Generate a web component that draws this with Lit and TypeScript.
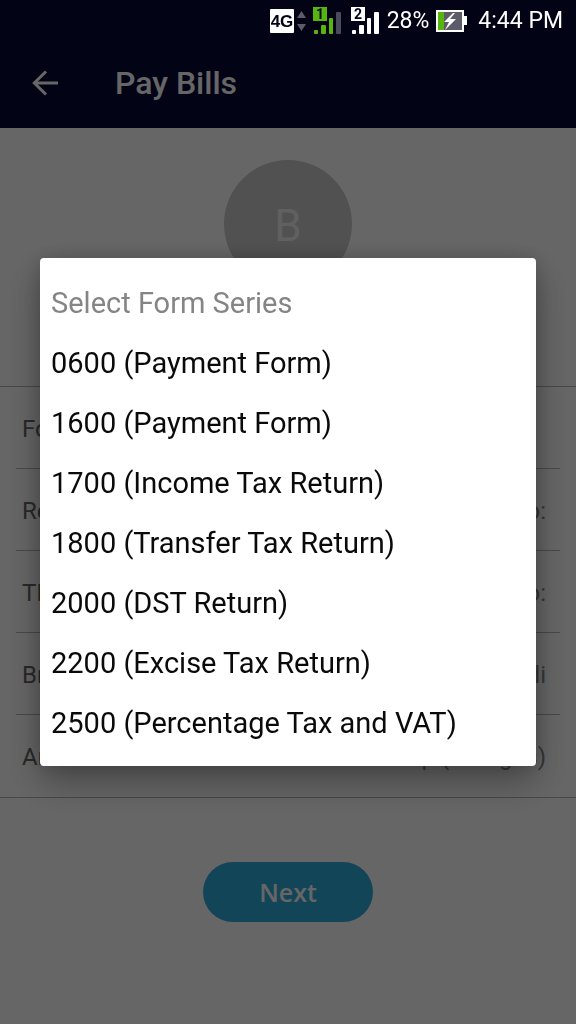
import { LitElement, html, css, svg } from "lit";
import { customElement, state } from "lit/decorators.js";

interface Field {
  id: string;
  label: string;
  hint: string;
}

const FIELDS: Field[] = [
  { id: "return", label: "Return Period", hint: "Period ending no:" },
  { id: "tin", label: "TIN", hint: "Taxpayer no:" },
  { id: "branch", label: "Branch Code", hint: "Branch kodi" },
  { id: "amount", label: "Amount", hint: "Php (Charges)" },
];

const SERIES = [
  "0600 (Payment Form)",
  "1600 (Payment Form)",
  "1700 (Income Tax Return)",
  "1800 (Transfer Tax Return)",
  "2000 (DST Return)",
  "2200 (Excise Tax Return)",
  "2500 (Percentage Tax and VAT)",
];

@customElement("status-bar")
class StatusBar extends LitElement {
  static styles = css`
    :host {
      display: flex;
      align-items: center;
      justify-content: flex-end;
      height: 42px;
      padding-right: 13px;
      box-sizing: border-box;
      color: #fff;
      font: 400 23px/28px Roboto, sans-serif;
    }
    .net { width: 36px; height: 24px; margin-right: 7px; }
    .sim { width: 28px; height: 28px; }
    .first { margin-right: 10px; }
    .second { margin-right: 8px; }
    .battery { width: 31px; height: 22px; margin: 0 11px 0 7px; }
    .digit { font: 700 14px Roboto, sans-serif; }
    .gen { font: 700 17px "Liberation Sans", sans-serif; }
  `;

  private sim(n: number, cls: string, on: string, last: string, ink: string) {
    return html`<svg class="sim ${cls}" viewBox="0 0 28 28" aria-hidden="true">
      ${svg`<rect x="0" y="0" width="14" height="14" fill=${on}/>
      <text class="digit" x="7" y="12" text-anchor="middle" fill=${ink}>${n}</text>
      <rect x="1" y="23" width="4" height="4" rx="1" fill=${on}/>
      <rect x="8" y="18" width="5" height="9" rx="1" fill=${on}/>
      <rect x="16" y="11" width="4" height="16" rx="1" fill=${on}/>
      <rect x="23" y="5" width="5" height="22" rx="1" fill=${last}/>`}
    </svg>`;
  }

  render() {
    return html`
      <svg class="net" viewBox="0 0 36 24" aria-hidden="true">
        <rect width="24" height="24" rx="1" fill="#fff" />
        <text class="gen" x="12" y="18" text-anchor="middle" fill="#05051a">4G</text>
        <path d="M27 9l4.500-7 4.500 7zM27 15l4.500 7 4.500-7z" fill="#5c5c68" />
      </svg>
      ${this.sim(1, "first", "#57b510", "#4a4a5c", "#05051a")}
      ${this.sim(2, "second", "#fff", "#fff", "#05051a")}
      <span>28%</span>
      <svg class="battery" viewBox="0 0 31 22" aria-hidden="true">
        <rect x="1" y="1" width="26" height="20" fill="#5c5c68" stroke="#fff" stroke-width="2" />
        <rect x="2" y="2" width="6" height="18" fill="#57b510" />
        <rect x="28" y="6" width="3" height="9" fill="#fff" />
        <path d="M17 3L8 12h5l-4 8 11-11h-6l5-6z" fill="#fff" />
      </svg>
      <span>4:44 PM</span>
    `;
  }
}

@customElement("series-picker")
class SeriesPicker extends LitElement {
  static styles = css`
    :host {
      display: block;
      box-sizing: border-box;
      width: 100%;
      padding: 15px 0 13px;
      background: #fff;
      border-radius: 4px;
      box-shadow: 0 16px 36px rgba(0, 0, 0, 0.32), 0 0 20px rgba(0, 0, 0, 0.16);
      font: 400 29px/60px Roboto, sans-serif;
      color: #0a0a0a;
    }
    .title { margin: 0; padding: 0 11px; font: inherit; color: #858585; }
    .list { list-style: none; margin: 0; padding: 0; }
    .option {
      display: block;
      width: 100%;
      padding: 0 11px;
      border: 0;
      background: none;
      font: inherit;
      color: inherit;
      text-align: left;
    }
  `;

  render() {
    return html`
      <h2 class="title">Select Form Series</h2>
      <ul class="list">
        ${SERIES.map(
          (s) => html`<li>
            <button class="option" type="button" @click=${() => this.pick(s)}>${s}</button>
          </li>`
        )}
      </ul>
    `;
  }

  private pick(series: string) {
    this.dispatchEvent(new CustomEvent("pick", { detail: series }));
  }
}

@customElement("app-root")
class AppRoot extends LitElement {
  @state() private open = true;
  @state() private series = "";

  static styles = css`
    :host {
      display: block;
      min-height: 100vh;
      background: #fff;
      font-family: Roboto, sans-serif;
    }
    .top { background: #080839; padding-top: 40px; }
    .status { position: fixed; inset: 0 0 auto 0; z-index: 3; }
    .bar {
      display: flex;
      align-items: center;
      height: 86px;
      padding: 0 32px 2px;
      gap: 57px;
      color: #fff;
    }
    .back { display: flex; padding: 0; border: 0; background: none; color: inherit; }
    .back svg { width: 26px; height: 26px; }
    .heading { margin: 0; font-size: 32px; line-height: 40px; font-weight: 500; }
    .biller { display: flex; justify-content: center; padding: 32px 0 98px; }
    .avatar {
      display: grid;
      place-items: center;
      box-sizing: border-box;
      width: 128px;
      height: 128px;
      padding-top: 4px;
      border-radius: 50%;
      background: #cacaca;
      color: #f0f0f0;
      font-size: 44px;
    }
    .fields { border: solid #b4b4b4; border-width: 1px 0; padding: 0 16px; }
    .field {
      display: flex;
      align-items: center;
      box-sizing: border-box;
      height: 82px;
      padding: 2px 14px 0 6px;
      border-bottom: 1px solid #b4b4b4;
      font-size: 24px;
      color: #666;
    }
    .field:last-child { border-bottom: 0; }
    .input {
      flex: 1;
      min-width: 0;
      padding: 0;
      border: 0;
      outline: 0;
      background: none;
      appearance: none;
      font: inherit;
      color: inherit;
      text-align: right;
    }
    .input::placeholder { color: #888; opacity: 1; }
    .actions { display: flex; justify-content: center; padding: 64px 0; }
    .next {
      min-width: 170px;
      height: 60px;
      border: 0;
      border-radius: 30px;
      background: #30adde;
      color: #fff;
      font: 600 25px/32px "Open Sans", sans-serif;
    }
    .scrim {
      position: fixed;
      inset: 0;
      z-index: 2;
      display: flex;
      align-items: center;
      padding: 0 40px;
      background: rgba(0, 0, 0, 0.6);
    }
  `;

  render() {
    return html`
      <status-bar class="status"></status-bar>
      <header class="top">
        <div class="bar">
          <button class="back" type="button" aria-label="Back">
            <svg viewBox="0 0 26 26" fill="none" stroke="currentColor" stroke-width="3" aria-hidden="true">
              <path d="M26 13H2M14 1.500L2.300 13 14 24.500" />
            </svg>
          </button>
          <h1 class="heading">Pay Bills</h1>
        </div>
      </header>
      <main>
        <div class="biller"><div class="avatar">B</div></div>
        <form class="fields">
          <div class="field">
            <label for="series">Form Series</label>
            <select class="input" id="series" @mousedown=${this.show}>
              <option>${this.series}</option>
            </select>
          </div>
          ${FIELDS.map(
            (f) => html`<div class="field">
              <label for=${f.id}>${f.label}</label>
              <input class="input" id=${f.id} placeholder=${f.hint} />
            </div>`
          )}
        </form>
        <div class="actions"><button class="next" type="button">Next</button></div>
      </main>
      ${this.open
        ? html`<div class="scrim">
            <series-picker role="dialog" aria-label="Select Form Series" @pick=${this.choose}></series-picker>
          </div>`
        : ""}
    `;
  }

  private show(e: Event) {
    e.preventDefault();
    this.open = true;
  }

  private choose(e: CustomEvent<string>) {
    this.series = e.detail;
    this.open = false;
  }
}
